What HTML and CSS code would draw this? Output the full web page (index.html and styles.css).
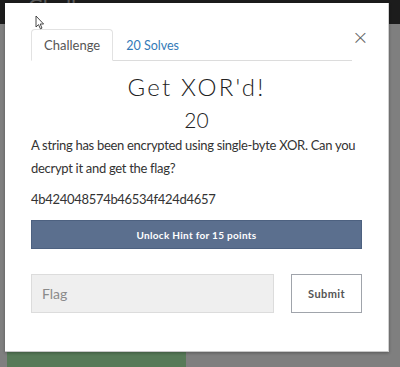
FILE: index.html
```html
<!DOCTYPE html>
<html lang="en">
<head>
    <meta charset="UTF-8">
    <title>Challenges</title>
    <link rel="stylesheet" href="styles.css">
</head>
<body>

<nav class="topbar">
    <div class="brand">Challenges</div>
</nav>

<div class="page">
    <div class="solved-bar"></div>
</div>

<div class="modal">
    <div class="modal-head">
        <div class="tabs">
            <a class="tab active" href="#">Challenge</a>
            <a class="tab" href="#">20 Solves</a>
        </div>
        <button class="close">&times;</button>
    </div>

    <h2 class="chal-name">Get XOR'd!</h2>
    <h3 class="chal-value">20</h3>

    <p class="chal-desc">A string has been encrypted using single-byte XOR. Can you decrypt it and get the flag?</p>
    <p class="chal-desc">4b424048574b46534f424d4657</p>

    <button class="hint-btn">Unlock Hint for 15 points</button>

    <div class="submit-row">
        <input type="text" class="flag-input" placeholder="Flag">
        <button class="submit-btn">Submit</button>
    </div>
</div>

<svg class="cursor" width="10" height="15" viewBox="0 0 10 15">
    <path d="M1 1 L1 12 L3.5 9.6 L5.4 13.8 L7 13.1 L5.2 9 L8.6 9 Z" fill="#fff" stroke="#333" stroke-width="0.9" stroke-linejoin="round"/>
</svg>

</body>
</html>
```

FILE: styles.css
```css
body {
    margin: 0;
    font-family: 'Lato', sans-serif;
    background: #7f7f7f; /* dimmed page behind the modal */
    width: 400px;
    height: 367px;
    overflow: hidden;
    position: relative;
}
.topbar {
    background: #1c1c1c;
    height: 24px;
}
.brand {
    color: #5a5a5a;
    font-size: 22px;
    line-height: 12px;
    padding-left: 28px;
}
.page {
    padding: 328px 0 0 7px;
}
.solved-bar {
    width: 179px;
    height: 20px;
    background: #577a58;
}

/* Modal */
.modal {
    position: absolute;
    top: 3px;
    left: 5px;
    width: 331px;
    height: 322px;
    padding: 26px 26px 0 26px;
    background: #fff;
    border-right: 1px solid #d0d0d0;
    border-bottom: 1px solid #c8c8c8;
    box-shadow: 0 1px 3px rgba(0, 0, 0, 0.3);
}
.modal-head {
    display: flex;
    align-items: center;
}
.tabs {
    flex: 1;
    display: flex;
    border-bottom: 1px solid #dcdcdc;
}
.tab {
    display: block;
    padding: 0 12px;
    height: 30px;
    line-height: 31px;
    font-size: 13px;
    color: #337ab7;
    text-decoration: none;
    margin-bottom: -1px;
    border: 1px solid transparent;
    border-radius: 4px 4px 0 0;
}
.tab.active {
    color: #555;
    border-color: #e2e2e2;
    border-bottom-color: #fff;
    margin-right: 1px;
}
.tab + .tab {
    padding-left: 11px;
    font-size: 12.5px;
}
.close {
    background: none;
    border: none;
    padding: 0;
    width: 10px;
    font-size: 20px;
    font-family: 'DejaVu Sans', sans-serif;
    font-weight: 300;
    color: #666;
    line-height: 20px;
    align-self: flex-start;
    margin-top: -2px;
}
.chal-name {
    margin: 12px 0 0;
    text-align: center;
    font-size: 24px;
    font-weight: 300;
    letter-spacing: 2.2px;
    line-height: 28px;
    color: #222;
}
.chal-value {
    margin: 5px 0 0;
    text-align: center;
    font-size: 21px;
    font-weight: 300;
    line-height: 28px;
    color: #222;
}
.chal-desc {
    margin: 0;
    font-size: 13px;
    letter-spacing: -0.3px;
    line-height: 23px;
    color: #333;
}
.chal-desc + .chal-desc {
    margin-top: 8px;
}
.hint-btn {
    display: block;
    width: 100%;
    height: 29px;
    margin-top: 9px;
    background: #5b6f8e;
    border: 1px solid #4d6180;
    color: #fff;
    font-family: 'Lato', sans-serif;
    font-weight: bold;
    font-size: 10px;
    letter-spacing: 0.3px;
}
.submit-row {
    display: flex;
    align-items: center;
    margin-top: 25px;
}
.flag-input {
    width: 243px;
    height: 39px;
    box-sizing: border-box;
    padding: 0 10px;
    background: #efefef;
    border: 1px solid #dcdcdc;
    font-family: 'Lato', sans-serif;
    font-size: 14px;
}
.flag-input::placeholder {
    color: #8a8a8a;
}
.submit-btn {
    margin-left: auto;
    width: 71px;
    height: 39px;
    background: #fff;
    border: 1px solid #a0a4ab;
    color: #555;
    font-family: 'Lato', sans-serif;
    font-weight: bold;
    font-size: 11px;
    letter-spacing: 0.4px;
}

/* mouse pointer captured in the screenshot */
.cursor {
    position: absolute;
    left: 35px;
    top: 15px;
}
```
